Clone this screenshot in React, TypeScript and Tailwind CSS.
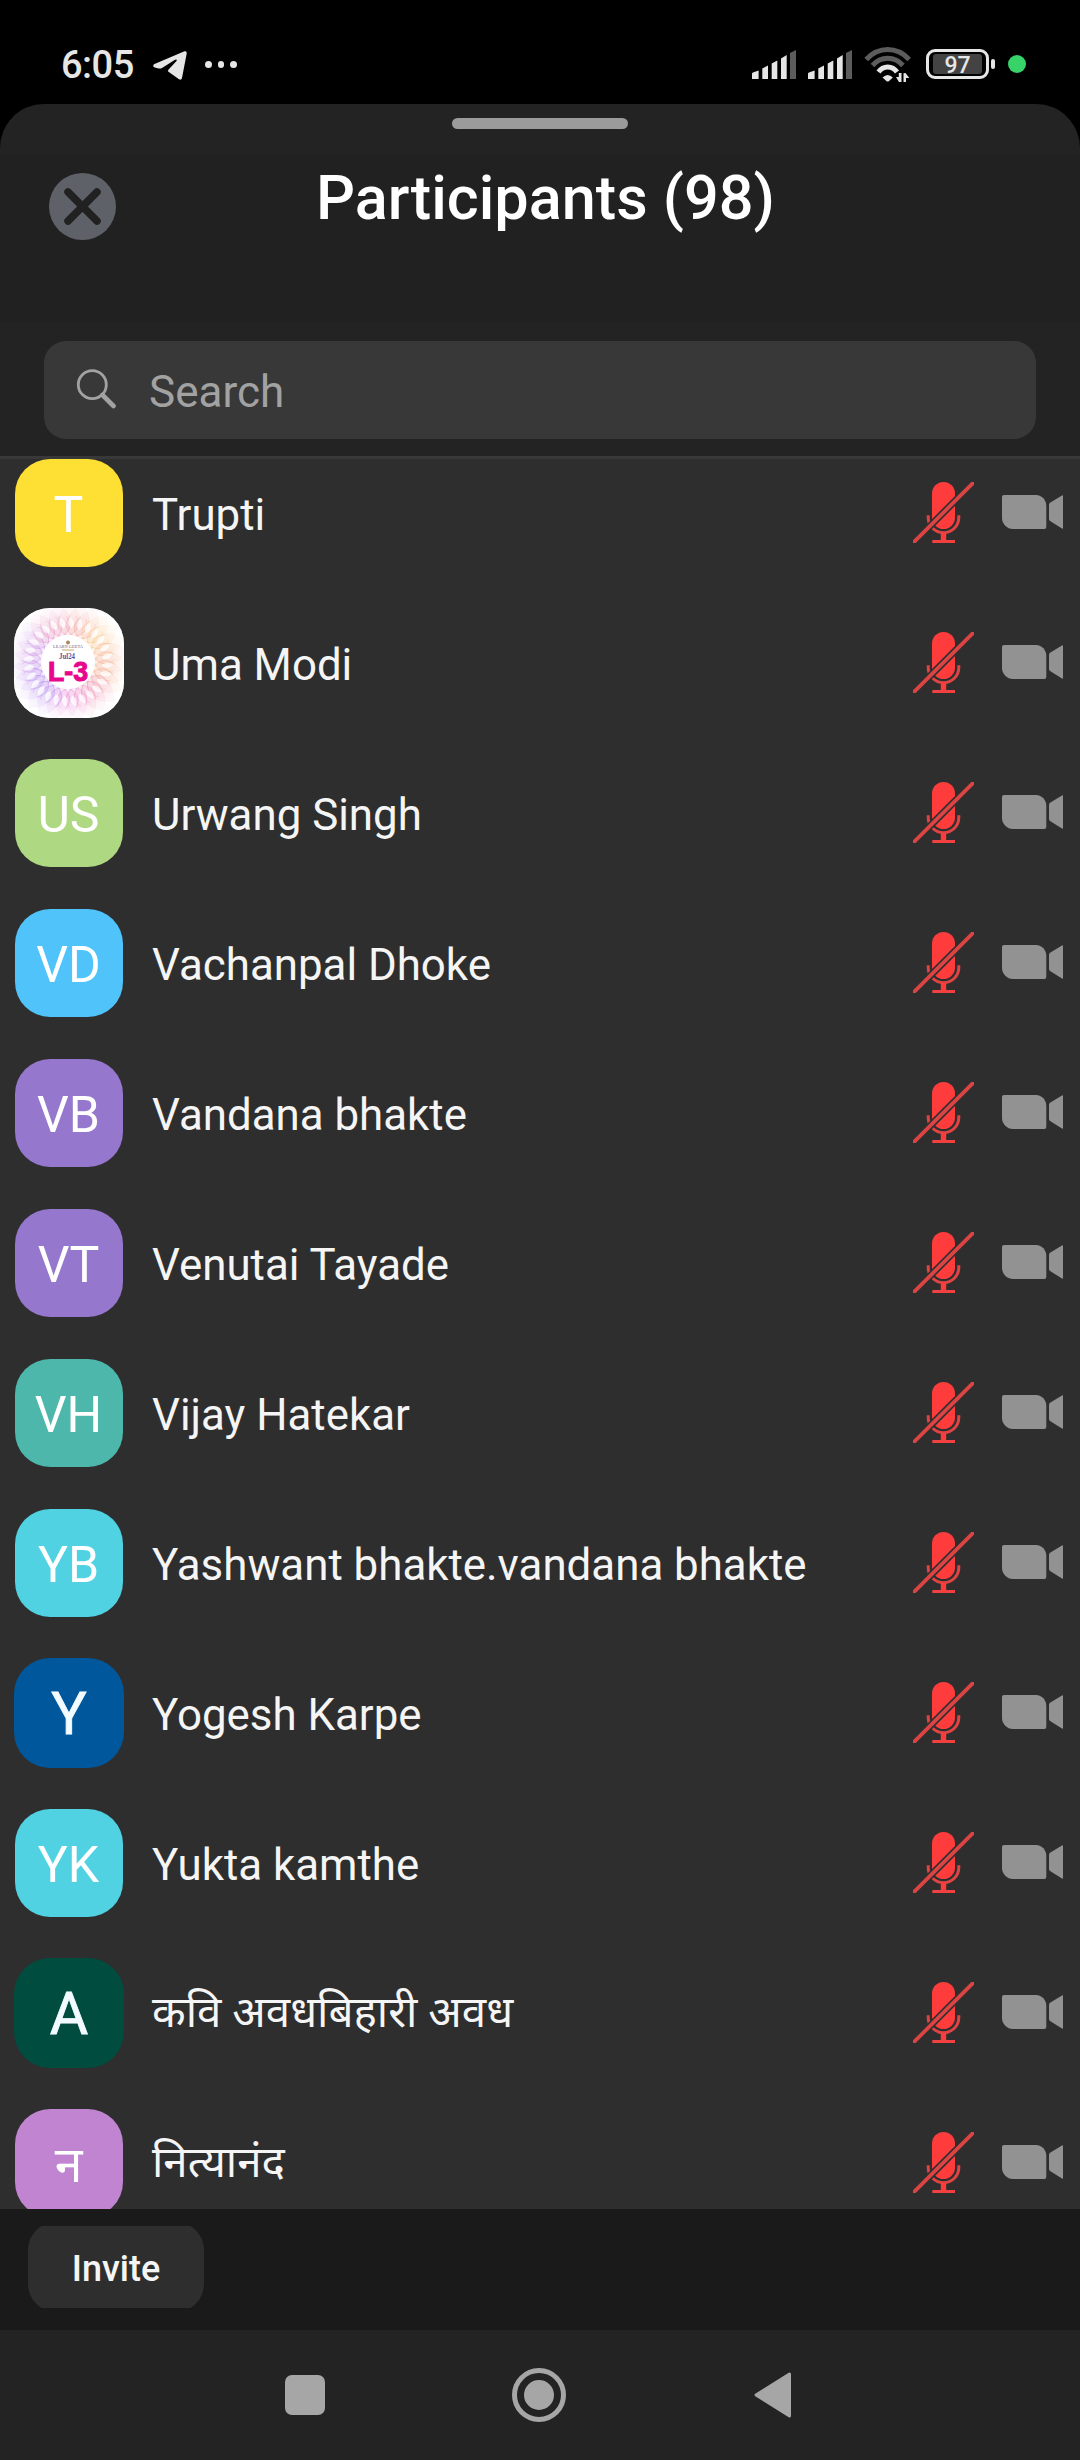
import React from "react";

type Person = { name: string; initials?: string; color?: string; photo?: "logo" | "letter"; devanagari?: boolean };

const people: Person[] = [
  { name: "Trupti", initials: "T", color: "bg-[#fedf33]" },
  { name: "Uma Modi", photo: "logo" },
  { name: "Urwang Singh", initials: "US", color: "bg-[#afd883]" },
  { name: "Vachanpal Dhoke", initials: "VD", color: "bg-[#50c3fb]" },
  { name: "Vandana bhakte", initials: "VB", color: "bg-[#9577cd]" },
  { name: "Venutai Tayade", initials: "VT", color: "bg-[#9577cd]" },
  { name: "Vijay Hatekar", initials: "VH", color: "bg-[#4db7ac]" },
  { name: "Yashwant bhakte.vandana bhakte", initials: "YB", color: "bg-[#50d2e2]" },
  { name: "Yogesh Karpe", initials: "Y", color: "bg-[#01579b]", photo: "letter" },
  { name: "Yukta kamthe", initials: "YK", color: "bg-[#50d2e2]" },
  { name: "कवि अवधबिहारी अवध", initials: "A", color: "bg-[#004d40]", photo: "letter", devanagari: true },
  { name: "नित्यानंद", initials: "न", color: "bg-[#c184d1]", devanagari: true },
];

const petals = Array.from({ length: 28 }, (_, i) => (i * 360) / 28);

function petalColor(deg: number) {
  if (deg < 30) return "#f3a3a0";
  if (deg < 75) return "#f8c98c";
  if (deg < 125) return "#f5b08f";
  if (deg < 165) return "#ee93b4";
  if (deg < 200) return "#ea8fdc";
  if (deg < 270) return "#b98af2";
  if (deg < 320) return "#cf94e6";
  return "#ec9cc4";
}

function LogoAvatar() {
  return (
    <svg viewBox="0 0 110 110" className="-m-px size-[110px] shrink-0 rounded-[36px] bg-white">
      <defs>
        <radialGradient id="fade" cx="55" cy="54" r="62" gradientUnits="userSpaceOnUse">
          <stop offset="0.6" stopColor="#fff" stopOpacity="0" />
          <stop offset="1" stopColor="#fff" stopOpacity="0.85" />
        </radialGradient>
      </defs>
      {petals.map((d) => (
        <g key={d} transform={`translate(54 54) rotate(${d})`} stroke={petalColor(d)} fill={petalColor(d)}>
          <path d="M0 -26C15 -33 16 -46 2 -60C-13 -47 -14 -34 0 -26Z" fillOpacity="0.2" strokeOpacity="0.25" strokeWidth="0.6" />
          <path d="M0 -26C9 -30 13 -36 8 -46" fill="none" strokeOpacity="0.5" strokeWidth="0.9" />
          <path d="M0 -26C-9 -30 -13 -36 -8 -46" fill="none" strokeOpacity="0.5" strokeWidth="0.9" />
        </g>
      ))}
      <rect width="110" height="110" fill="url(#fade)" />
      {petals.map((d) => (
        <path key={d} transform={`translate(54 54) rotate(${d + 5})`} d="M0 -34C3.500 -36 4 -41 -1.5 -45C-4 -41 -3.500 -37 0 -34Z" fill="#fff" fillOpacity="0.75" />
      ))}
      <circle cx="54" cy="54" r="27" fill="#fff" />
      <circle cx="54" cy="34.5" r="2" fill="#a98a5c" />
      <text x="54" y="40" textAnchor="middle" textLength="30" lengthAdjust="spacingAndGlyphs" className="font-['Liberation_Serif'] text-[5px]" fill="#6b5a78">LEARN GEETA</text>
      <path d="M48 42H60" stroke="#c8a36a" strokeWidth="1" />
      <text x="53" y="50.5" textAnchor="middle" textLength="16" lengthAdjust="spacingAndGlyphs" className="font-['Liberation_Serif'] text-[7.5px] font-bold" fill="#63509b">Jul24</text>
      <text x="54" y="73" textAnchor="middle" textLength="40" lengthAdjust="spacingAndGlyphs" className="font-['Liberation_Sans'] text-[27px] font-bold" fill="#e8068c" stroke="#e8068c" strokeWidth="1">L-3</text>
    </svg>
  );
}

function Avatar({ person }: { person: Person }) {
  if (person.photo === "logo") return <LogoAvatar />;
  if (person.photo === "letter")
    return (
      <div className={`-m-px flex size-[110px] shrink-0 items-center justify-center rounded-[36px] pt-[2px] text-[59px] text-[#f2fbff] [-webkit-text-stroke:0.8px_#f2fbff] ${person.color}`}>
        {person.initials}
      </div>
    );
  return (
    <div className={`flex size-[108px] shrink-0 items-center justify-center rounded-[35px] pr-px pt-[5px] text-[50px] text-white ${person.color}`}>
      {person.initials}
    </div>
  );
}

function MicOff() {
  return (
    <svg viewBox="0 0 61 61" className="mb-[2px] size-[61px]" fill="none">
      <rect x="19" y="0" width="23" height="47" rx="11.5" fill="#ff3c3c" />
      <path d="M15.2 33.3V35.5A15.3 15.3 0 0 0 45.8 35.5V33.3" stroke="#e04343" strokeWidth="3" />
      <path d="M30.5 51V59" stroke="#ff3c3c" strokeWidth="5.4" />
      <path d="M19.3 59.5H42" stroke="#f04040" strokeWidth="3" />
      <path d="M6 55L55 6" stroke="#2e2e2e" strokeWidth="7" />
      <path d="M0 61L61 0" stroke="#dc4444" strokeWidth="3.8" />
    </svg>
  );
}

function Camera() {
  return (
    <svg viewBox="0 0 61 34" className="mb-[2px] h-[34px] w-[61px]" fill="#929292">
      <path d="M2 0H34C40 0 44.3 5 44.3 11V32Q44.3 34 42.3 34H11C5 34 0 29 0 23V2Q0 0 2 0Z" />
      <path d="M47 10Q47 8.5 48 7.7L60 .4Q61-.2 61 1V33Q61 34.200 60 33.600L48 26Q47 25.200 47 24Z" />
    </svg>
  );
}

function Signal() {
  return (
    <svg viewBox="0 0 44 29" className="h-[29px] w-[44px]" fill="#e6e6e6">
      <path d="M0 29V24Q0 23 1 22.600L6.600 20.500V29Z" />
      <path d="M10.300 29V18.500L16 15.500V29Z" />
      <path d="M19.700 29V13.500L25.300 10.500V29Z" />
      <path d="M29 29V8.500L34.700 5V29Z" />
      <path d="M38 29V3L44 0V29Z" fill="#5c5c5c" />
    </svg>
  );
}

function Wifi() {
  return (
    <svg viewBox="0 0 48 36" className="h-[36px] w-[48px]" fill="none">
      <path d="M2.200 12.500Q11.500 2.600 23.700 2.600T45.200 12.500" stroke="#5c5c5c" strokeWidth="5" />
      <path d="M8.500 18.500Q14.800 11.300 23.700 11.300T38.900 18.500" stroke="#5c5c5c" strokeWidth="5" />
      <path d="M14.500 25Q18 20 23.700 20T33 25" stroke="#e6e6e6" strokeWidth="5" />
      <path d="M18.500 30.500Q23.700 25.500 28.900 30.500L25 34Q23.700 35 22.400 34Z" fill="#e6e6e6" />
      <path d="M35 35H37.500V26H34.800V30H32ZM39.500 35V26.200L41.500 26L45.300 31H42V35Z" fill="#e6e6e6" />
    </svg>
  );
}

function StatusBar() {
  return (
    <header className="flex h-[104px] shrink-0 items-start bg-black pt-[47px]">
      <div className="ml-[61px] mt-[-4px] w-[75px] text-[38px] font-medium leading-[44px] tracking-[-0.5px] text-[#e6e6e6]">6:05</div>
      <svg viewBox="0 0 34 29" className="ml-[17px] mt-[4px] h-[29px] w-[34px]" fill="#e6e6e6">
        <path d="M1.500 13L31.500.3Q34-.3 33.700 2.500L29 27Q28.300 29.600 26 28.300L15.500 20.800Q14.500 20 15.600 18.600L23.500 10Q24.500 8 22 8.800L9 17Q7 18 4.500 17.300L1 16.200Q-.8 14.500 1.500 13Z" />
      </svg>
      <div className="ml-[18px] mt-[14px] flex gap-[6px]">
        {[0, 1, 2].map((n) => (
          <i key={n} className="size-[6.500px] rounded-full bg-[#e6e6e6]" />
        ))}
      </div>
      <div className="ml-auto mr-[54px] flex items-start">
        <div className="mt-[3px] flex gap-[12px]">
          <Signal />
          <Signal />
        </div>
        <div className="ml-[12px]">
          <Wifi />
        </div>
        <div className="ml-[14px] mt-[2px] flex h-[30px] w-[63px] items-center justify-center rounded-[9px] border-[3px] border-[#e6e6e6]">
          <div className="flex h-[20px] w-[49px] items-center justify-center rounded-[3px] bg-[#434343] pt-[2px] text-[23px] font-medium leading-none text-[#e6e6e6]">97</div>
        </div>
        <div className="ml-[2px] mt-[12px] h-[10px] w-[4px] rounded-[2px] bg-[#e6e6e6]" />
        <div className="ml-[13px] mt-[8px] size-[18px] rounded-full bg-[#37d268]" />
      </div>
    </header>
  );
}

export default function App() {
  return (
    <div className="flex h-[2460px] w-[1080px] flex-col overflow-hidden bg-black font-[Roboto,'Noto_Sans',sans-serif]">
      <StatusBar />
      <section className="flex h-[352px] shrink-0 flex-col rounded-t-[44px] bg-[#232323]">
        <div className="mx-auto mt-[14px] h-[11px] w-[176px] rounded-full bg-[#9b9b9b]" />
        <div className="mt-[25px] flex h-[168px] items-start bg-[#212121]">
          <svg viewBox="0 0 68 68" className="ml-[48px] mt-[18px] size-[68px]">
            <circle cx="34.500" cy="34.500" r="33.500" fill="#5e6167" />
            <path d="M20 20L49 49M49 20L20 49" stroke="#212121" strokeWidth="7.500" strokeLinecap="round" />
          </svg>
          <h1 className="ml-[200px] mt-[9px] whitespace-nowrap text-[61.200px] font-medium leading-[70px] text-white">Participants (98)</h1>
        </div>
        <div className="mx-[44px] mt-[19px] flex h-[98px] items-center rounded-[22px] bg-[#383838]">
          <svg viewBox="0 0 40 40" className="mb-[3px] ml-[32px] size-[40px]" fill="none" stroke="#a2a2a2">
            <circle cx="16.300" cy="15.700" r="14" strokeWidth="2.800" />
            <path d="M26.500 26L37.500 37" strokeWidth="4.600" strokeLinecap="round" />
          </svg>
          <span className="ml-[33px] pt-[3px] text-[44px] text-[#a2a2a2]">Search</span>
        </div>
      </section>
      <main className="h-[1753px] shrink-0 overflow-hidden border-t-[3px] border-[#383838] bg-[#2e2e2e]">
        <ul className="flex flex-col gap-[42px]">
          {people.map((p) => (
            <li key={p.name} className="flex h-[108px] items-center pl-[15px] pr-[17px]">
              <Avatar person={p} />
              <span className={`ml-[29px] flex-1 whitespace-nowrap text-[43.850px] text-[#f5f5f5] ${p.devanagari ? "pb-px" : "pt-[6px]"}`}>{p.name}</span>
              <MicOff />
              <div className="ml-[28px]">
                <Camera />
              </div>
            </li>
          ))}
        </ul>
      </main>
      <footer className="h-[121px] shrink-0 bg-[#1a1a1a] pl-[28px] pt-[17px]">
        <div className="flex h-[82px] w-[176px] items-center overflow-hidden">
          <button className="h-[90px] w-[176px] shrink-0 rounded-[28px] bg-[#2e2e2e] pt-[3px] text-[36px] font-medium text-[#f5f5f5]">Invite</button>
        </div>
      </footer>
      <nav className="flex h-[130px] shrink-0 items-center bg-[#232323]">
        <div className="ml-[285px] size-[40px] rounded-[7px] bg-[#a6a6a6]" />
        <svg viewBox="0 0 54 54" className="ml-[187px] size-[54px]">
          <circle cx="27" cy="27" r="24.500" fill="none" stroke="#a6a6a6" strokeWidth="5" />
          <circle cx="27" cy="27" r="15" fill="#a6a6a6" />
        </svg>
        <svg viewBox="0 0 38 46" className="ml-[188px] h-[46px] w-[38px]">
          <path d="M2 23L35.500 2V44Z" fill="#a6a6a6" stroke="#a6a6a6" strokeWidth="3" strokeLinejoin="round" />
        </svg>
      </nav>
    </div>
  );
}
